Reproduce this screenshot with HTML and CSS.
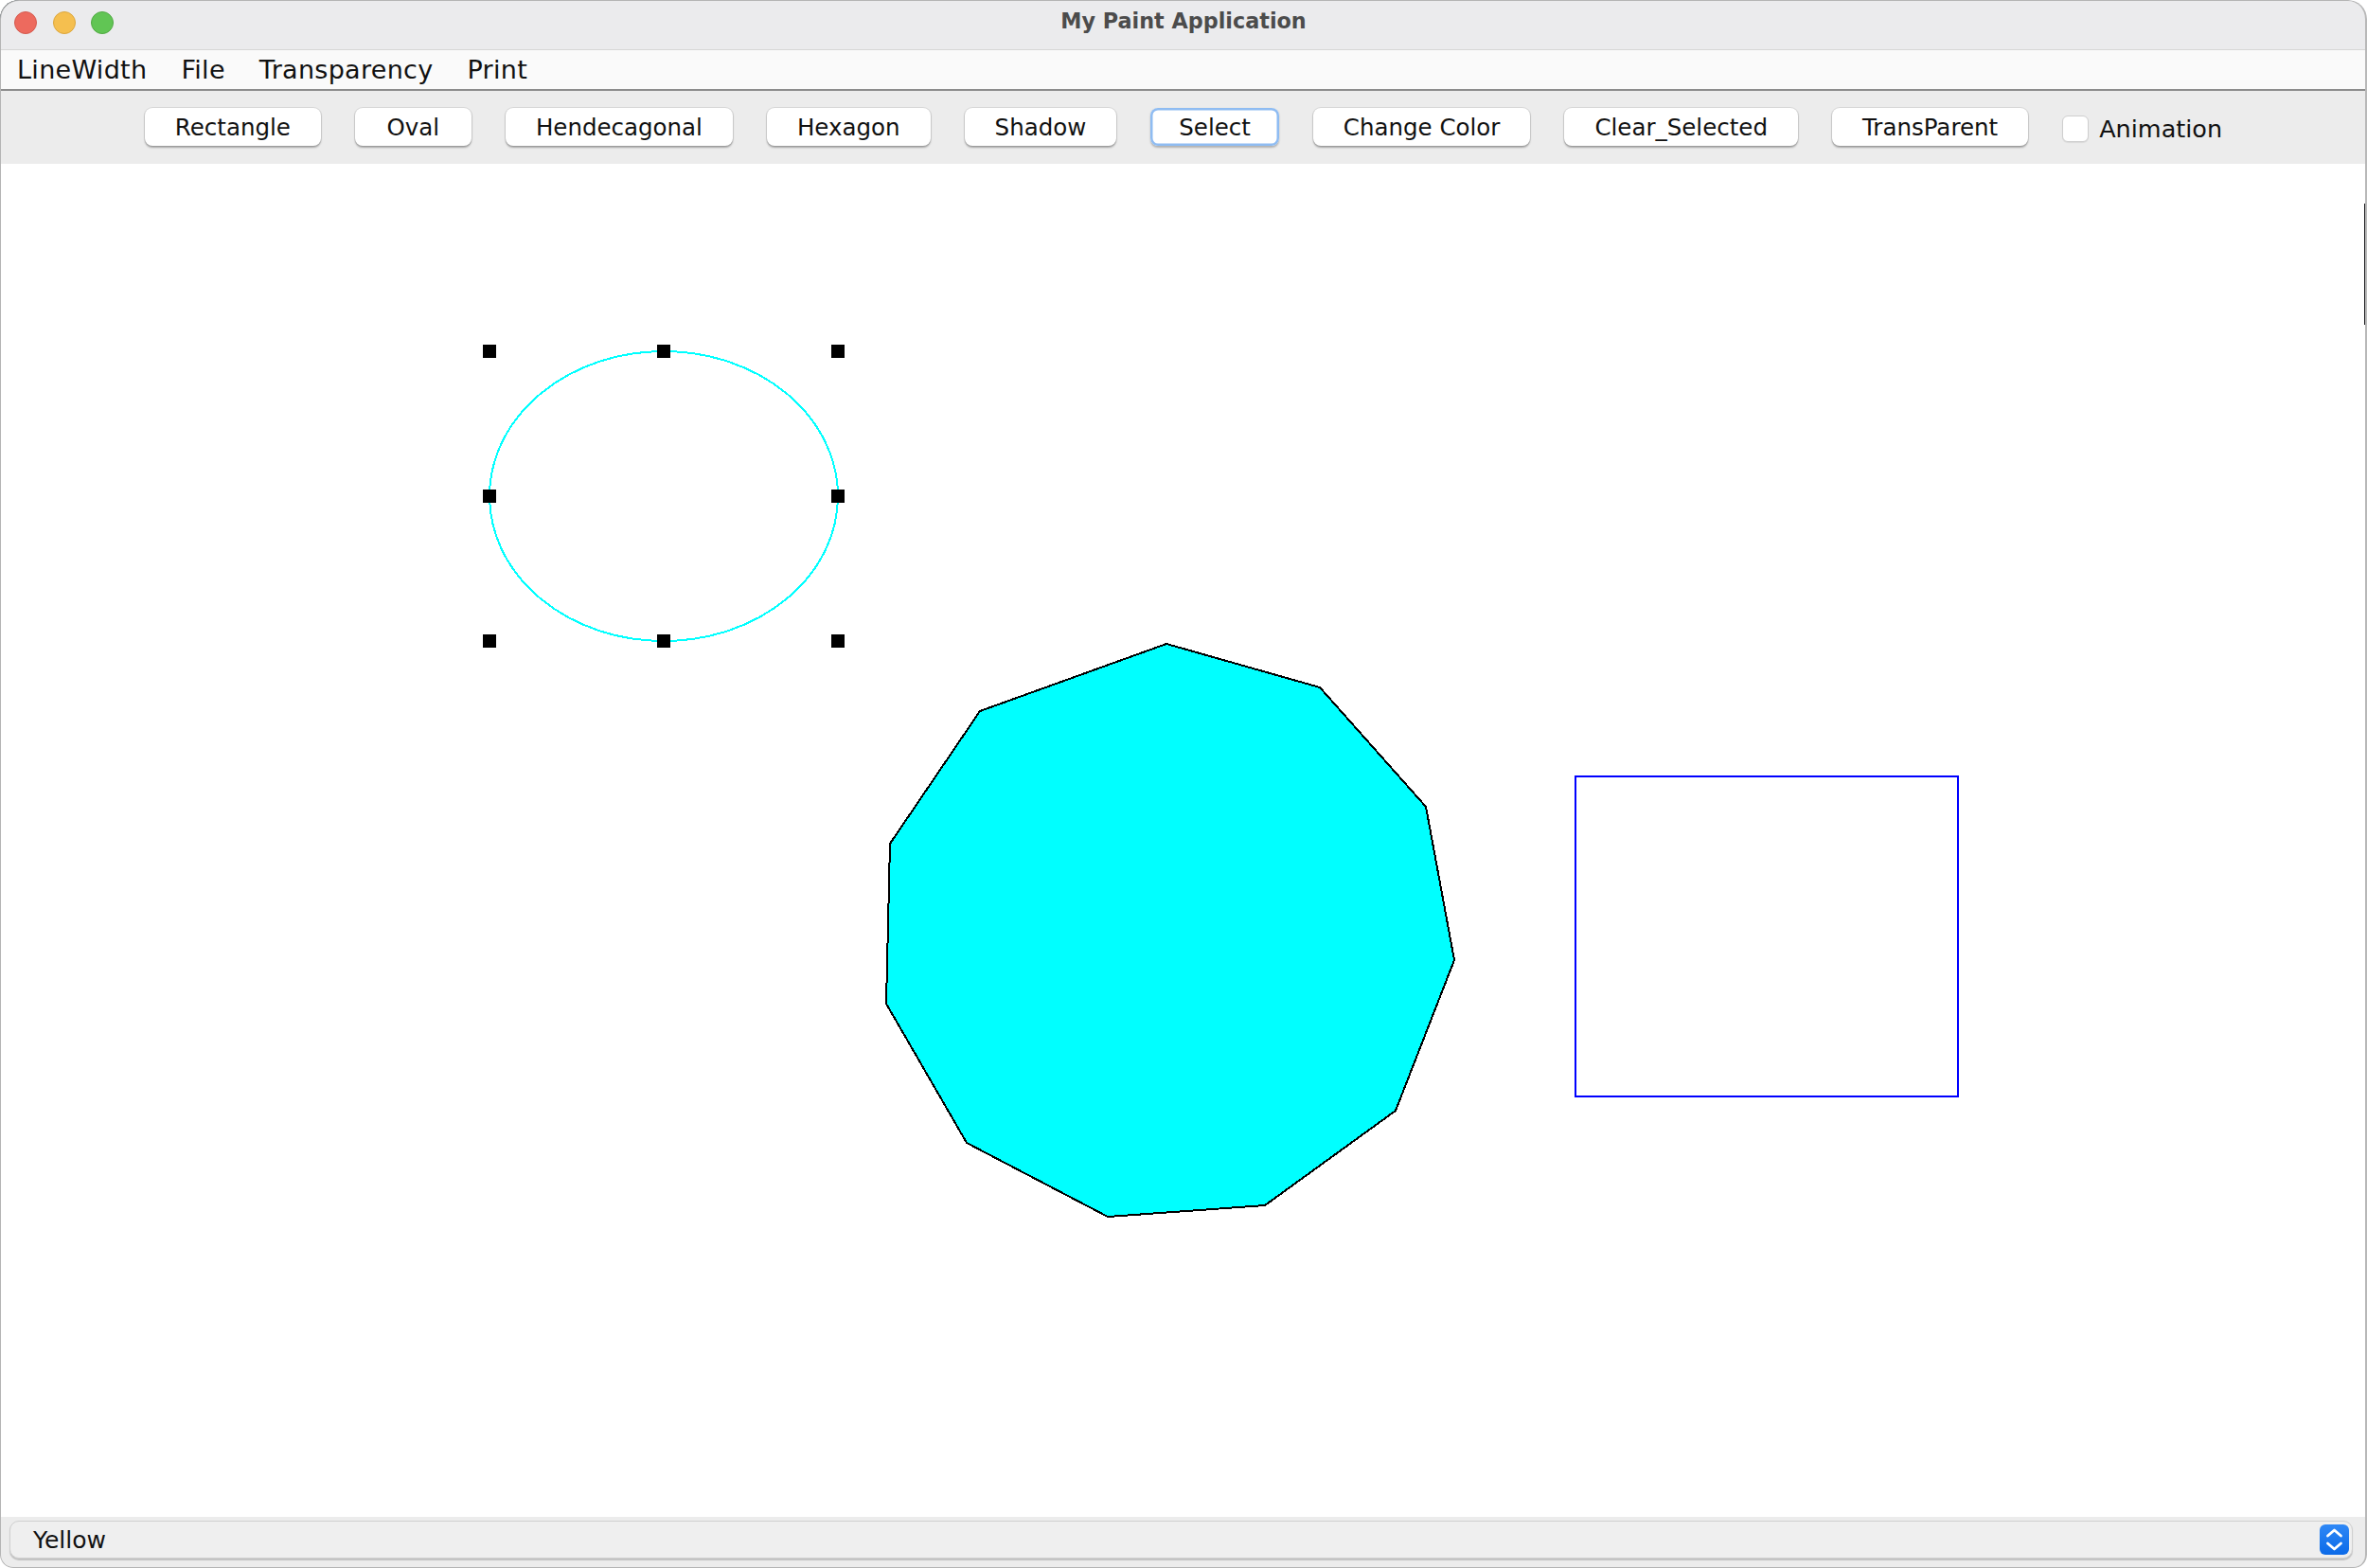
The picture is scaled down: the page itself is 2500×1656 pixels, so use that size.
FILE: index.html
```html
<!DOCTYPE html>
<html>
<head>
<meta charset="utf-8">
<title>My Paint Application</title>
<link rel="stylesheet" href="styles.css">
</head>
<body>
<div class="window">
  <div class="titlebar">
    <div class="lights">
      <span class="light red"></span>
      <span class="light yellow"></span>
      <span class="light green"></span>
    </div>
    <div class="title">My Paint Application</div>
    <div></div>
  </div>
  <div class="menubar">
    <span class="menu">LineWidth</span>
    <span class="menu">File</span>
    <span class="menu">Transparency</span>
    <span class="menu">Print</span>
  </div>
  <div class="toolbar">
    <button class="btn">Rectangle</button>
    <button class="btn btn-oval">Oval</button>
    <button class="btn">Hendecagonal</button>
    <button class="btn">Hexagon</button>
    <button class="btn">Shadow</button>
    <button class="btn focused">Select</button>
    <button class="btn">Change Color</button>
    <button class="btn">Clear_Selected</button>
    <button class="btn">TransParent</button>
    <label class="check"><span class="box"></span><span class="check-label">Animation</span></label>
  </div>
  <div class="canvas">
    <svg class="drawing" width="2500" height="1429" viewBox="0 173 2500 1429" xmlns="http://www.w3.org/2000/svg">
      <ellipse cx="701" cy="524" rx="184" ry="153" fill="none" stroke="#00ffff" stroke-width="2"/>
      <g fill="#000">
        <rect x="510" y="364" width="14" height="14"/>
        <rect x="694" y="364" width="14" height="14"/>
        <rect x="878" y="364" width="14" height="14"/>
        <rect x="510" y="517" width="14" height="14"/>
        <rect x="878" y="517" width="14" height="14"/>
        <rect x="510" y="670" width="14" height="14"/>
        <rect x="694" y="670" width="14" height="14"/>
        <rect x="878" y="670" width="14" height="14"/>
      </g>
      <polygon points="1232,680 1394,726 1506,852 1536,1014 1474,1173 1336,1273 1170,1285 1021,1207 936,1060 940,891 1035,751" fill="#00ffff" stroke="#000" stroke-width="2"/>
      <rect x="1664" y="820" width="404" height="338" fill="none" stroke="#0000ff" stroke-width="2"/>
    </svg>
  </div>
  <div class="bottom">
    <div class="combo">
      <span class="combo-text">Yellow</span>
      <span class="combo-arrow">
        <svg width="31" height="32" viewBox="0 0 31 32" xmlns="http://www.w3.org/2000/svg">
          <path d="M8.5 12 L15.5 6 L22.5 12" fill="none" stroke="#fff" stroke-width="2.8" stroke-linecap="round" stroke-linejoin="round"/>
          <path d="M8.5 20 L15.5 26 L22.5 20" fill="none" stroke="#fff" stroke-width="2.8" stroke-linecap="round" stroke-linejoin="round"/>
        </svg>
      </span>
    </div>
  </div>
  <div class="edge-shadow"></div>
  <div class="corner-dark"></div>
</div>
</body>
</html>
```

FILE: styles.css
```css
html, body {
  margin: 0;
  padding: 0;
  background: #ffffff;
}

body {
  width: 2500px;
  height: 1656px;
  overflow: hidden;
  font-family: "DejaVu Sans", "Liberation Sans", sans-serif;
  color: #111;
}

.window {
  position: relative;
  width: 2500px;
  height: 1656px;
  display: flex;
  flex-direction: column;
  border-radius: 20px 20px 14px 14px;
  overflow: hidden;
  background: #fff;
}

.window::after {
  content: "";
  position: absolute;
  inset: 0;
  border: 1px solid #b4b4b4;
  border-right: 2px solid #b8b8b8;
  border-radius: 20px 20px 14px 14px;
  pointer-events: none;
}

.titlebar {
  height: 52px;
  flex: 0 0 52px;
  background: #ebebed;
  border-bottom: 1px solid #d6d6d6;
  display: grid;
  grid-template-columns: 1fr auto 1fr;
  align-items: start;
}

.lights {
  display: flex;
  gap: 16.5px;
  padding-left: 15px;
  padding-top: 12px;
  align-items: center;
}

.light {
  width: 24px;
  height: 24px;
  border-radius: 50%;
  box-sizing: border-box;
}

.red { background: #ed6a5e; border: 1px solid #d45a4f; }
.yellow { background: #f5bf4f; border: 1px solid #dba63d; }
.green { background: #61c554; border: 1px solid #51a944; }

.title {
  font-family: "DejaVu Sans", sans-serif;
  font-weight: bold;
  font-size: 22.3px;
  line-height: 26px;
  color: #4c4c4c;
  padding-top: 9px;
}

.menubar {
  height: 41px;
  flex: 0 0 41px;
  background: #fafafa;
  border-bottom: 2px solid #8c8c8c;
  display: flex;
  align-items: center;
}

.menu {
  font-size: 27px;
  letter-spacing: 0.3px;
  padding: 0 18px;
  color: #111;
  line-height: 41px;
}

.toolbar {
  height: 77px;
  flex: 0 0 77px;
  background: #ececec;
  display: flex;
  align-items: center;
  justify-content: center;
  gap: 36px;
}

.btn {
  height: 40px;
  padding: 0 32px;
  background: #fff;
  border: none;
  border-radius: 8px;
  box-shadow: 0 0 0 1px rgba(0,0,0,0.07), 0 1.5px 2px rgba(0,0,0,0.3);
  font-family: "DejaVu Sans", sans-serif;
  font-size: 24.5px;
  color: #111;
  margin: 0;
  margin-top: -1px;
}

.btn-oval {
  min-width: 123px;
}

.btn.focused {
  padding: 0 30px;
  box-shadow: inset 0 0 0 2.5px #8fbcf2, 0 1.5px 2px rgba(0,0,0,0.25);
}

.check {
  display: flex;
  align-items: center;
  gap: 11px;
  margin-top: 3px;
}

.box {
  width: 28px;
  height: 28px;
  box-sizing: border-box;
  background: #fff;
  border: 1px solid #cfcfcf;
  border-radius: 6px;
  box-shadow: 0 1px 1px rgba(0,0,0,0.08);
}

.check-label {
  font-size: 25.5px;
  color: #111;
}

.canvas {
  flex: 1 1 auto;
  background: #fff;
  overflow: hidden;
}

.drawing {
  display: block;
  shape-rendering: crispEdges;
}

.bottom {
  height: 54px;
  flex: 0 0 54px;
  background: #ececec;
  box-sizing: border-box;
  padding: 4px 15px 8px 10px;
}

.combo {
  height: 40px;
  box-sizing: border-box;
  background: #efefef;
  border: 1px solid #d0d0d0;
  border-radius: 10px;
  box-shadow: 0 1.5px 1px rgba(0,0,0,0.18);
  display: flex;
  align-items: center;
  justify-content: space-between;
  padding: 0 3px 0 24px;
}

.combo-text {
  font-size: 25px;
  color: #111;
}

.combo-arrow {
  width: 31px;
  height: 32px;
  border-radius: 6px;
  background: linear-gradient(#2f88f6, #0b6ae8);
  display: flex;
}

.edge-shadow {
  position: absolute;
  right: 0;
  top: 215px;
  width: 3px;
  height: 128px;
  background: #1c1c1e;
}

.corner-dark {
  position: absolute;
  left: 0;
  top: 0;
  width: 20px;
  height: 20px;
  background: radial-gradient(circle at 20px 20px, transparent 19px, #1d2a30 20px);
}
```
